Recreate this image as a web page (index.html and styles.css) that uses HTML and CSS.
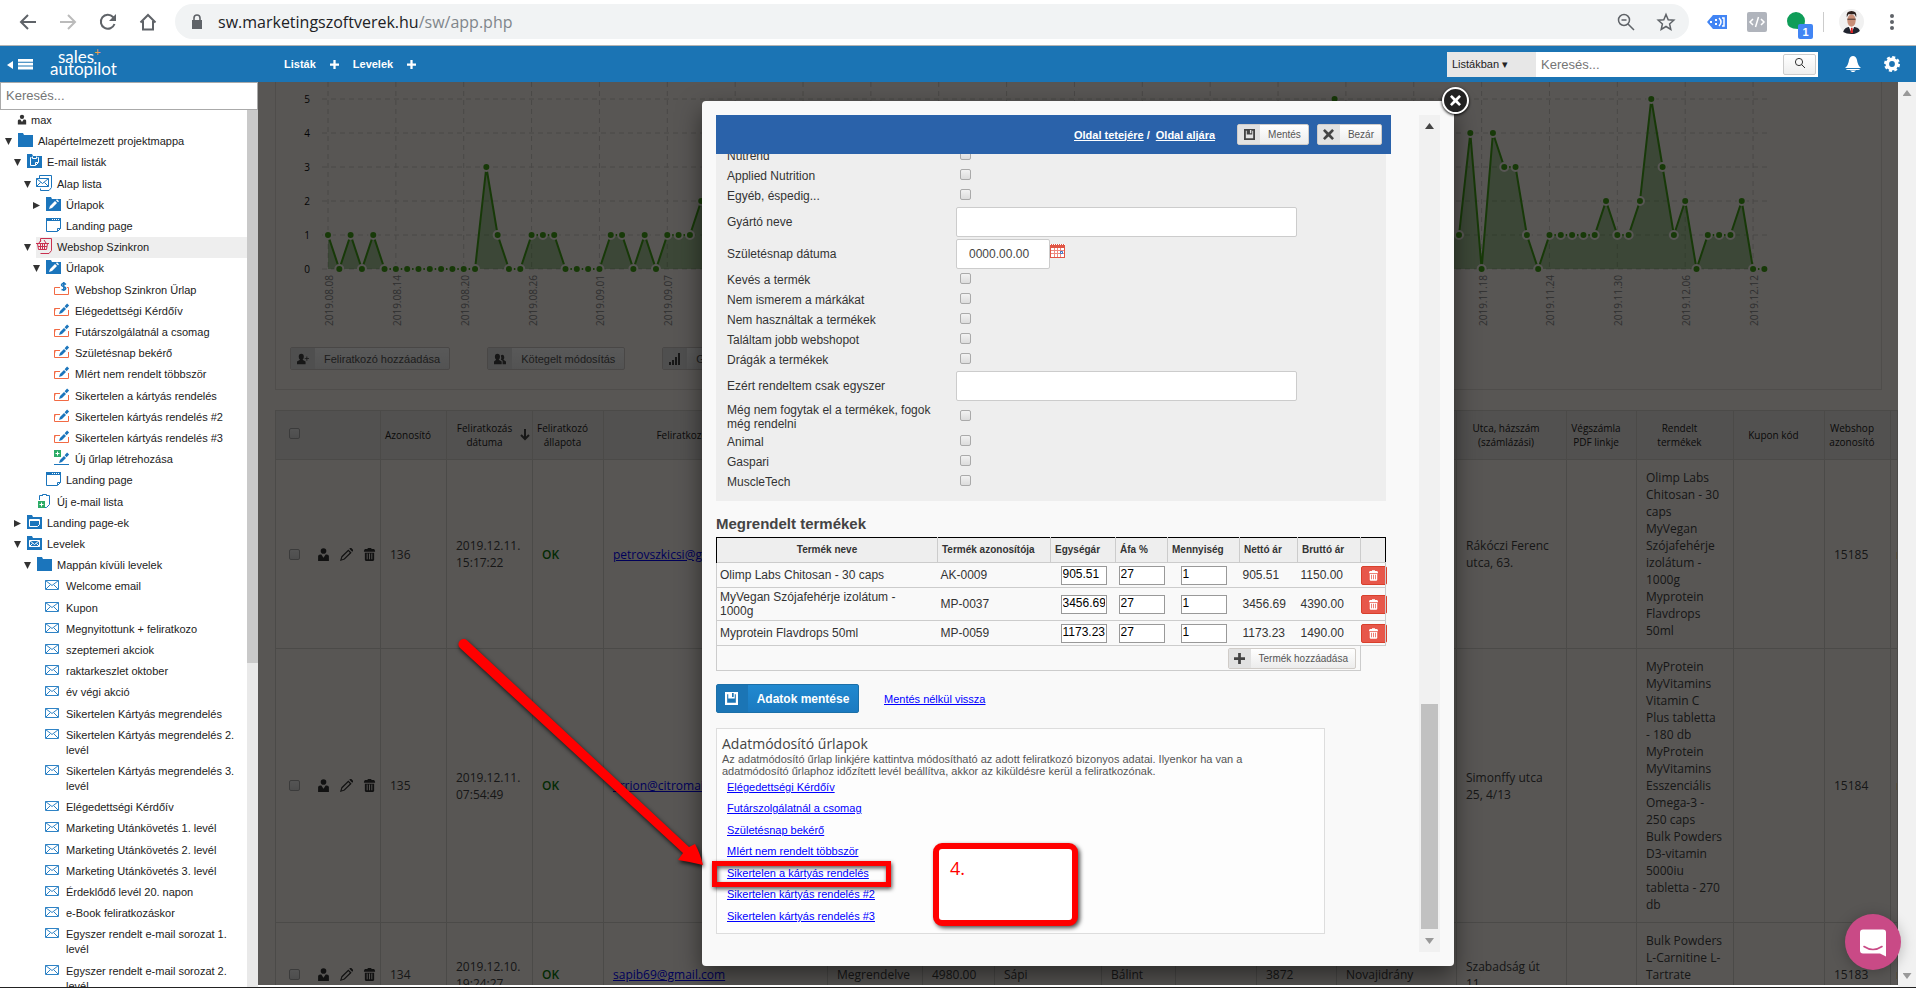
FILE: index.html
```html
<!DOCTYPE html>
<html lang="hu">
<head>
    <meta charset="UTF-8">
    <meta name="viewport" content="width=device-width, initial-scale=1.0">
    <title>SalesAutopilot</title>
    <link rel="stylesheet" href="styles.css">
</head>
<body>
    <!-- Icon set -->
    <svg class="sprite" aria-hidden="true">
        <symbol id="i-user" viewBox="0 0 12 12"><circle cx="6" cy="2.8" r="2.6"/><path d="M1 12V7.500Q1 6 3 6h1l2 3 2-3h1q2 0 2 1.500V12z"/></symbol>
        <symbol id="i-folder" viewBox="0 0 16 16"><path fill="#1b75bc" d="M1 1h5l1 2h9v12H1z"/></symbol>
        <symbol id="i-folder-list" viewBox="0 0 16 16"><path fill="#1b75bc" d="M1 1h5l1 2h9v12H1z"/><path fill="none" stroke="#fff" d="M5.500 4.500h-1v8h5l3-3v-5h-1M6.500 3.500v2h4v-2M9.500 12v-2.500H12"/></symbol>
        <symbol id="i-folder-pen" viewBox="0 0 16 16"><path fill="#1b75bc" d="M1 1h5l1 2h9v12H1z"/><path fill="#fff" d="M4 13l1-3 5-5 2 2-5 5zM11 4.200l1-1 2 2-1 1z"/></symbol>
        <symbol id="i-folder-page" viewBox="0 0 16 16"><path fill="#1b75bc" d="M1 1h5l1 2h9v12H1z"/><path fill="none" stroke="#fff" d="M3.500 5.500h10v5l-2 2h-8zM3.500 6.500h10"/></symbol>
        <symbol id="i-folder-mail" viewBox="0 0 16 16"><path fill="#1b75bc" d="M1 1h5l1 2h9v12H1z"/><path fill="none" stroke="#fff" d="M3.500 5.500h10v6h-10zl5 4 5-4M3.500 11.500l3-3M13.500 11.500l-3-3"/></symbol>
        <symbol id="i-maillist" viewBox="0 0 16 16"><path fill="none" stroke="#1b75bc" d="M3.500 3V.5h12v12l-2.500 3H4.500v-2M.5 3.500h12v8H.5zl6 5 6-5M.5 11.500l4-4M12.500 11.500l-4-4"/></symbol>
        <symbol id="i-shoplist" viewBox="0 0 16 16"><path fill="none" stroke="#c9304f" d="M4.500 4V.5h11v12l-2.500 3H4.500M0 5.500h13M1.500 5.500l1 6h8l1-6M4.500 5v6M6.500 5v6M8.500 5v6M2 8.500h9M3 5l2-3M10 5L8 2"/></symbol>
        <symbol id="i-page" viewBox="0 0 16 16"><path fill="none" stroke="#1b75bc" d="M1.500 1.500h14v10l-3 3h-11zM12.500 14v-2.500h3"/><path fill="#1b75bc" d="M1 1h15v3H1z"/><path stroke="#fff" stroke-dasharray="1 1" d="M7 2.500h8"/></symbol>
        <symbol id="i-form" viewBox="0 0 16 16"><path fill="none" stroke="#f26a44" d="M6 6.500H.5v7h14V8M1 6.500v2"/><path fill="#1b75bc" d="M5 12l1-3 4-4 2 2-4 4zM10.600 4.200l2.500-2.700 2 2-2.500 2.700z"/></symbol>
        <symbol id="i-shopform" viewBox="0 0 16 16"><path fill="none" stroke="#f26a44" d="M6 6.500H.5v7h14V6.500H13"/><path fill="none" stroke="#1b75bc" stroke-width="1.500" d="M12 3.500Q9.500 1.500 8 3t1.500 2.500T11.500 8 7.500 8.500M9.800 1v9"/></symbol>
        <symbol id="i-newform" viewBox="0 0 16 16"><path fill="#2bab66" d="M0 0h7v7H0z"/><path stroke="#fff" d="M3.500 1.500v4M1.500 3.500h4"/><path stroke="#1b75bc" d="M0 14.500h15"/><path fill="#1b75bc" d="M5 13l1-3 4-4 2 2-4 4zM10.600 5.200l2.500-2.700 2 2-2.500 2.700z"/></symbol>
        <symbol id="i-newlist" viewBox="0 0 16 16"><path fill="none" stroke="#1b75bc" d="M3.500 7V2.500H6M11 2.500h2.500v9l-3 3H9M6.500 3V1.500h4V3"/><path fill="#2bab66" d="M2 8h7v7H2z"/><path stroke="#fff" d="M5.500 9.500v4M3.500 11.500h4"/></symbol>
        <symbol id="i-mail" viewBox="0 0 14 10"><path fill="none" stroke="#2f83c5" d="M.5.5h13v9H.5zl6.500 5 6.500-5M1 9l4-4M13 9L9 5"/></symbol>
        <symbol id="i-save" viewBox="0 0 12 12"><path fill-rule="evenodd" d="M0 0h12v12H0zM2 2v8h8V2H9v4H3V2zM6.500 1v3.500H8V1z"/></symbol>
        <symbol id="i-x" viewBox="0 0 12 12"><path d="M0 2l2-2 4 3.800L10 0l2 2-3.800 4L12 10l-2 2-4-3.800L2 12l-2-2 3.800-4z"/></symbol>
        <symbol id="i-plus" viewBox="0 0 12 12"><path d="M4.500 0h3v4.500H12v3H7.500V12h-3V7.500H0v-3h4.500z"/></symbol>
        <symbol id="i-trash" viewBox="0 0 12 14"><path fill-rule="evenodd" d="M4 0h4v1h3l1 2v1H0V3l1-2h3zM1 5h10v8l-1 1H2l-1-1zM3 6v6h1V6zM5.500 6v6h1V6zM8 6v6h1V6z"/></symbol>
        <symbol id="i-pencil" viewBox="0 0 14 14"><path fill-rule="evenodd" d="M0 14l1.500-5L9 1.500 12.500 5 5 12.500zM2.500 10l-.8 2.300L4 11.500 10.500 5 9 3.500zM10 .8l.8-.8h1.400L14 1.800v1.400l-.8.8z"/></symbol>
    </svg>

    <div class="browser-bar">
        <svg class="nav-icon" viewBox="0 0 20 20"><path d="M18 10H3M10 3l-7 7 7 7"/></svg>
        <svg class="nav-icon faded" viewBox="0 0 20 20"><path d="M2 10h15M10 3l7 7-7 7"/></svg>
        <svg class="nav-icon" viewBox="0 0 20 20"><path d="M16.500 12A7 7 0 1 1 15 5l2 2"/><path class="solid" d="M18 2v7h-7z"/></svg>
        <svg class="nav-icon" viewBox="0 0 20 20"><path d="M2.500 10.500L10 3l7.500 7.500M5 9v8.500h10V9"/></svg>
        <div class="url-pill">
            <svg class="lock" viewBox="0 0 12 16"><path fill="#5f6368" d="M1 6h10v9H1z"/><path fill="none" stroke="#5f6368" stroke-width="1.600" d="M3 7V4a3 3 0 0 1 6 0v3"/></svg>
            <span class="url">sw.marketingszoftverek.hu<span class="path">/sw/app.php</span></span>
            <svg class="nav-icon" viewBox="0 0 20 20"><circle cx="8" cy="8" r="5.500"/><path d="M12 12l6 6M5.500 8h5"/></svg>
            <svg class="nav-icon" viewBox="0 0 20 20"><path d="M10 2.500l2.200 5.200 5.600.5-4.200 3.700 1.200 5.500L10 14.500l-4.800 2.900 1.200-5.500-4.200-3.700 5.600-.5z"/></svg>
        </div>
        <svg class="ext" viewBox="0 0 20 20"><path fill="#4285f4" d="M6 3h14v14H6l-6-7z"/><path fill="none" stroke="#fff" stroke-width="1.500" d="M12 6q4 4 0 8M15 6h2v8h-2"/><path fill="#fff" d="M8 7h2v2H8zM8 11h2v2H8zM3 9h2v2H3z"/></svg>
        <svg class="ext" viewBox="0 0 20 20"><rect width="20" height="20" rx="2" fill="#b0b4bc"/><path fill="none" stroke="#fff" stroke-width="1.500" d="M6 7l-3 3 3 3M14 7l3 3-3 3M11.500 5l-3 10"/></svg>
        <span class="ext badge-wrap">
            <svg viewBox="0 0 20 20"><path fill="#0f9d58" d="M9 0a9 9 0 0 1 9 9q0 7-7 11v-3Q0 17 0 9a9 9 0 0 1 9-9"/></svg>
            <span class="badge">1</span>
        </span>
        <span class="divider"></span>
        <svg class="avatar" viewBox="0 0 24 24"><circle cx="12" cy="12" r="12" fill="#f1f1f1"/><path fill="#20242f" d="M4 22q1-5 8-5t8 4q-3 3-8 3t-8-2"/><path fill="#fff" d="M9 16h6l-3 7z"/><path fill="#d22" d="M11.500 18h1.500l.5 5h-2.500z"/><ellipse cx="12" cy="11" rx="4" ry="6" fill="#c98f78"/><path fill="#2b1f1c" d="M7.500 8q-1-6 4.500-6t4.500 6l-1.500-3h-6z"/><path stroke="#2b1f1c" stroke-width=".8" d="M8 9.800h8"/></svg>
        <svg class="dots" viewBox="0 0 4 16"><circle cx="2" cy="2" r="2"/><circle cx="2" cy="8" r="2"/><circle cx="2" cy="14" r="2"/></svg>
    </div>

    <header class="app-header">
        <svg class="menu-toggle" viewBox="0 0 26 12"><path d="M0 7l6-4v8zM11 1h15v2.700H11zM11 4.700h15v2.700H11zM11 8.400h15v3H11z"/></svg>
        <div class="logo"><span class="logo-top">sales<sup>+</sup></span><span>autopilot</span></div>
        <nav class="main-nav">
            <a href="#">Listák</a>
            <a href="#" aria-label="Új lista"><svg class="plus"><use href="#i-plus"/></svg></a>
            <a href="#">Levelek</a>
            <a href="#" aria-label="Új levél"><svg class="plus"><use href="#i-plus"/></svg></a>
        </nav>
        <div class="head-search">
            <select aria-label="Keresés helye"><option>Listákban ▾</option></select>
            <input type="text" placeholder="Keresés..." aria-label="Keresés">
            <button aria-label="Keresés"><svg viewBox="0 0 12 12"><circle cx="5" cy="5" r="3.600"/><path d="M7.500 7.500L11 11"/></svg></button>
        </div>
        <svg class="bell" viewBox="0 0 16 16"><path d="M8 0q3 0 4 4 .5 5 4 8H0q3.500-3 4-8 1-4 4-4M1 13h14q0 1-2 1H3q-2 0-2-1M5 14.500h6L9 16H7z"/></svg>
        <svg class="gear" viewBox="0 0 16 16"><circle cx="8" cy="8" r="4.700" fill="none" stroke="#fff" stroke-width="3.600"/><circle cx="8" cy="8" r="6.800" fill="none" stroke="#fff" stroke-width="2.400" stroke-dasharray="3 2.340"/></svg>
    </header>

    <div class="content">
        <aside class="sidebar">
            <input type="text" class="tree-search" placeholder="Keresés..." aria-label="Keresés a listában">
            <div class="tree-wrap">
                <ul class="tree">
                    <li class="user"><svg><use href="#i-user"/></svg><span>max</span></li>
                    <li class="open"><svg><use href="#i-folder"/></svg><span>Alapértelmezett projektmappa</span></li>
                    <li class="l1 open"><svg><use href="#i-folder-list"/></svg><span>E-mail listák</span></li>
                    <li class="l2 open"><svg><use href="#i-maillist"/></svg><span>Alap lista</span></li>
                    <li class="l3 closed"><svg><use href="#i-folder-pen"/></svg><span>Űrlapok</span></li>
                    <li class="l3"><svg><use href="#i-page"/></svg><span>Landing page</span></li>
                    <li class="l2 open selected"><svg><use href="#i-shoplist"/></svg><span>Webshop Szinkron</span></li>
                    <li class="l3 open"><svg><use href="#i-folder-pen"/></svg><span>Űrlapok</span></li>
                    <li class="l4"><svg><use href="#i-shopform"/></svg><span>Webshop Szinkron Űrlap</span></li>
                    <li class="l4"><svg><use href="#i-form"/></svg><span>Elégedettségi Kérdőív</span></li>
                    <li class="l4"><svg><use href="#i-form"/></svg><span>Futárszolgálatnál a csomag</span></li>
                    <li class="l4"><svg><use href="#i-form"/></svg><span>Születésnap bekérő</span></li>
                    <li class="l4"><svg><use href="#i-form"/></svg><span>MIért nem rendelt többször</span></li>
                    <li class="l4"><svg><use href="#i-form"/></svg><span>Sikertelen a kártyás rendelés</span></li>
                    <li class="l4"><svg><use href="#i-form"/></svg><span>Sikertelen kártyás rendelés #2</span></li>
                    <li class="l4"><svg><use href="#i-form"/></svg><span>Sikertelen kártyás rendelés #3</span></li>
                    <li class="l4"><svg><use href="#i-newform"/></svg><span>Új űrlap létrehozása</span></li>
                    <li class="l3"><svg><use href="#i-page"/></svg><span>Landing page</span></li>
                    <li class="l2"><svg><use href="#i-newlist"/></svg><span>Új e-mail lista</span></li>
                    <li class="l1 closed"><svg><use href="#i-folder-page"/></svg><span>Landing page-ek</span></li>
                    <li class="l1 open"><svg><use href="#i-folder-mail"/></svg><span>Levelek</span></li>
                    <li class="l2 open"><svg><use href="#i-folder"/></svg><span>Mappán kívüli levelek</span></li>
                    <li class="l3 mail"><svg><use href="#i-mail"/></svg><span>Welcome email</span></li>
                    <li class="l3 mail"><svg><use href="#i-mail"/></svg><span>Kupon</span></li>
                    <li class="l3 mail"><svg><use href="#i-mail"/></svg><span>Megnyitottunk + feliratkozo</span></li>
                    <li class="l3 mail"><svg><use href="#i-mail"/></svg><span>szeptemeri akciok</span></li>
                    <li class="l3 mail"><svg><use href="#i-mail"/></svg><span>raktarkeszlet oktober</span></li>
                    <li class="l3 mail"><svg><use href="#i-mail"/></svg><span>év végi akció</span></li>
                    <li class="l3 mail"><svg><use href="#i-mail"/></svg><span>Sikertelen Kártyás megrendelés</span></li>
                    <li class="l3 mail"><svg><use href="#i-mail"/></svg><span>Sikertelen Kártyás megrendelés 2. levél</span></li>
                    <li class="l3 mail"><svg><use href="#i-mail"/></svg><span>Sikertelen Kártyás megrendelés 3. levél</span></li>
                    <li class="l3 mail"><svg><use href="#i-mail"/></svg><span>Elégedettségi Kérdőív</span></li>
                    <li class="l3 mail"><svg><use href="#i-mail"/></svg><span>Marketing Utánkövetés 1. levél</span></li>
                    <li class="l3 mail"><svg><use href="#i-mail"/></svg><span>Marketing Utánkövetés 2. levél</span></li>
                    <li class="l3 mail"><svg><use href="#i-mail"/></svg><span>Marketing Utánkövetés 3. levél</span></li>
                    <li class="l3 mail"><svg><use href="#i-mail"/></svg><span>Érdeklődő levél 20. napon</span></li>
                    <li class="l3 mail"><svg><use href="#i-mail"/></svg><span>e-Book feliratkozáskor</span></li>
                    <li class="l3 mail"><svg><use href="#i-mail"/></svg><span>Egyszer rendelt e-mail sorozat 1. levél</span></li>
                    <li class="l3 mail"><svg><use href="#i-mail"/></svg><span>Egyszer rendelt e-mail sorozat 2. levél</span></li>
                </ul>
                <div class="tree-scroll"><div class="tree-thumb"></div></div>
            </div>
        </aside>

        <main class="main">
            <section class="chart-card">
                <svg id="chart" class="chart"></svg>
                <div class="chart-actions">
                    <button class="btn"><span class="ico"><svg viewBox="0 0 14 12"><path d="M5 0q3 0 3 3.500Q8 6 6.500 7L10 9v3H0V9l3.500-2Q2 6 2 3.500 2 0 5 0M11 3h1v2h2v1h-2v2h-1V6H9V5h2z"/></svg></span><span class="txt">Feliratkozó hozzáadása</span></button>
                    <button class="btn"><span class="ico"><svg viewBox="0 0 14 12"><path d="M4 0q3 0 3 3.500Q7 6 5.500 7L9 9v3H0V9l2.500-2Q1 6 1 3.500 1 0 4 0M10 1q2 0 2 3 0 2-1 3l3 2v3h-4V8L8 7q1-2 0-5 .5-1 2-1"/></svg></span><span class="txt">Kötegelt módosítás</span></button>
                    <button class="btn"><span class="ico"><svg viewBox="0 0 12 12"><path d="M0 9h2v3H0zM3 7h2v5H3zM6 4h2v8H6zM9 0h2v12H9z"/></svg></span><span class="txt">Grafikon</span></button>
                </div>
            </section>

            <table class="subscribers">
                <colgroup>
                    <col class="w105"><col class="w66"><col class="w86"><col class="w71"><col class="w224"><col class="w95"><col class="w72"><col class="w107"><col class="w74"><col class="w81"><col class="w80"><col class="w120"><col class="w110"><col class="w70"><col class="w97"><col class="w91"><col class="w66"><col>
                </colgroup>
                <thead>
                    <tr>
                        <th><input type="checkbox" aria-label="Mind kijelölése"></th>
                        <th>Azonosító</th>
                        <th class="sort-col"><span class="sorted">Feliratkozás dátuma<svg viewBox="0 0 10 12"><path d="M5 0v10M1 6l4 4 4-4"/></svg></span></th>
                        <th>Feliratkozó állapota</th>
                        <th>Feliratkozó e-mail címe</th>
                        <th></th><th></th><th></th><th></th><th></th><th></th><th></th>
                        <th>Utca, házszám (számlázási)</th>
                        <th>Végszámla PDF linkje</th>
                        <th>Rendelt<br>termékek</th>
                        <th>Kupon kód</th>
                        <th>Webshop azonosító</th>
                        <th></th>
                    </tr>
                </thead>
                <tbody>
                    <tr>
                        <td><div class="tools"><input type="checkbox" aria-label="136"><svg><use href="#i-user"/></svg><svg><use href="#i-pencil"/></svg><svg><use href="#i-trash"/></svg></div></td>
                        <td>136</td>
                        <td>2019.12.11. 15:17:22</td>
                        <td class="ok">OK</td>
                        <td><a href="#">petrovszkicsi@gmail.com</a></td>
                        <td></td><td></td><td></td><td></td><td></td><td></td><td></td>
                        <td>Rákóczi Ferenc utca, 63.</td>
                        <td></td>
                        <td>Olimp Labs Chitosan - 30 caps<br>MyVegan Szójafehérje izolátum - 1000g<br>Myprotein Flavdrops 50ml</td>
                        <td></td>
                        <td>15185</td>
                        <td>n</td>
                    </tr>
                    <tr>
                        <td><div class="tools"><input type="checkbox" aria-label="135"><svg><use href="#i-user"/></svg><svg><use href="#i-pencil"/></svg><svg><use href="#i-trash"/></svg></div></td>
                        <td>135</td>
                        <td>2019.12.11. 07:54:49</td>
                        <td class="ok">OK</td>
                        <td><a href="#">arrion@citromail.hu</a></td>
                        <td></td><td></td><td></td><td></td><td></td><td></td><td></td>
                        <td>Simonffy utca 25, 4/13</td>
                        <td></td>
                        <td>MyProtein MyVitamins Vitamin C<br>Plus tabletta<br>- 180 db<br>MyProtein MyVitamins Esszenciális Omega-3 - 250 caps<br>Bulk Powders D3-vitamin 5000iu tabletta - 270 db</td>
                        <td></td>
                        <td>15184</td>
                        <td>n</td>
                    </tr>
                    <tr>
                        <td><div class="tools"><input type="checkbox" aria-label="134"><svg><use href="#i-user"/></svg><svg><use href="#i-pencil"/></svg><svg><use href="#i-trash"/></svg></div></td>
                        <td>134</td>
                        <td>2019.12.10. 19:24:27</td>
                        <td class="ok">OK</td>
                        <td><a href="#">sapib69@gmail.com</a></td>
                        <td>Megrendelve</td><td>4980.00</td><td>Sápi</td><td>Bálint</td><td></td><td>3872</td><td>Novajidrány</td>
                        <td>Szabadság út 11.</td>
                        <td></td>
                        <td>Bulk Powders L-Carnitine L-Tartrate<br>100 g<br>1 db</td>
                        <td></td>
                        <td>15183</td>
                        <td>n</td>
                    </tr>
                </tbody>
            </table>

            <div class="overlay">
                <div class="modal">
                    <button class="modal-close" aria-label="Bezárás"><svg><use href="#i-x"/></svg></button>
                    <div class="modal-body">
                        <div class="toolbar">
                            <a href="#">Oldal tetejére</a><span class="slash">/</span><a href="#">Oldal aljára</a>
                            <button class="btn small"><span class="ico"><svg><use href="#i-save"/></svg></span><span class="txt">Mentés</span></button>
                            <button class="btn small"><span class="ico"><svg><use href="#i-x"/></svg></span><span class="txt">Bezár</span></button>
                        </div>
                        <form class="fields">
                            <label for="f1">Nutrend</label><input type="checkbox" id="f1">
                            <label for="f2">Applied Nutrition</label><input type="checkbox" id="f2">
                            <label for="f3">Egyéb, éspedig...</label><input type="checkbox" id="f3">
                            <label for="f4">Gyártó neve</label><input type="text" id="f4">
                            <label for="f5">Születésnap dátuma</label>
                            <div class="date">
                                <input type="text" id="f5" value="0000.00.00">
                                <svg viewBox="0 0 15 15"><path fill="#e05545" d="M0 1h15v14H0z"/><path stroke="#fff" stroke-dasharray="1 1" d="M0 1.500h15"/><path fill="#fff" d="M1 5h13v9H1z"/><path stroke="#ee8a80" d="M1 7.500h13M1 10.500h13M4.500 5v9M7.500 5v9M10.500 5v9"/><path fill="none" stroke="#3878c8" d="M10.500 8.500h2v2h-2z"/></svg>
                            </div>
                            <label for="f6">Kevés a termék</label><input type="checkbox" id="f6">
                            <label for="f7">Nem ismerem a márkákat</label><input type="checkbox" id="f7">
                            <label for="f8">Nem használtak a termékek</label><input type="checkbox" id="f8">
                            <label for="f9">Találtam jobb webshopot</label><input type="checkbox" id="f9">
                            <label for="f10">Drágák a termékek</label><input type="checkbox" id="f10">
                            <label for="f11">Ezért rendeltem csak egyszer</label><input type="text" id="f11">
                            <label for="f12">Még nem fogytak el a termékek, fogok még rendelni</label><input type="checkbox" id="f12">
                            <label for="f13">Animal</label><input type="checkbox" id="f13">
                            <label for="f14">Gaspari</label><input type="checkbox" id="f14">
                            <label for="f15">MuscleTech</label><input type="checkbox" id="f15">
                        </form>

                        <h2>Megrendelt termékek</h2>
                        <table class="products">
                            <colgroup><col class="w221"><col class="w113"><col class="w65"><col class="w52"><col class="w72"><col class="w58"><col class="w63"><col></colgroup>
                            <thead>
                                <tr><th>Termék neve</th><th>Termék azonosítója</th><th>Egységár</th><th>Áfa %</th><th>Mennyiség</th><th>Nettó ár</th><th>Bruttó ár</th><th></th></tr>
                            </thead>
                            <tbody>
                                <tr>
                                    <td>Olimp Labs Chitosan - 30 caps</td><td>AK-0009</td>
                                    <td class="num"><input type="text" value="905.51" aria-label="Egységár"></td>
                                    <td><input type="text" value="27" aria-label="Áfa"></td>
                                    <td class="mid"><input type="text" value="1" aria-label="Mennyiség"></td>
                                    <td>905.51</td><td>1150.00</td>
                                    <td class="del"><button aria-label="Törlés"><svg><use href="#i-trash"/></svg></button></td>
                                </tr>
                                <tr>
                                    <td>MyVegan Szójafehérje izolátum - 1000g</td><td>MP-0037</td>
                                    <td class="num"><input type="text" value="3456.69" aria-label="Egységár"></td>
                                    <td><input type="text" value="27" aria-label="Áfa"></td>
                                    <td class="mid"><input type="text" value="1" aria-label="Mennyiség"></td>
                                    <td>3456.69</td><td>4390.00</td>
                                    <td class="del"><button aria-label="Törlés"><svg><use href="#i-trash"/></svg></button></td>
                                </tr>
                                <tr>
                                    <td>Myprotein Flavdrops 50ml</td><td>MP-0059</td>
                                    <td class="num"><input type="text" value="1173.23" aria-label="Egységár"></td>
                                    <td><input type="text" value="27" aria-label="Áfa"></td>
                                    <td class="mid"><input type="text" value="1" aria-label="Mennyiség"></td>
                                    <td>1173.23</td><td>1490.00</td>
                                    <td class="del"><button aria-label="Törlés"><svg><use href="#i-trash"/></svg></button></td>
                                </tr>
                            </tbody>
                        </table>
                        <div class="add-row">
                            <button class="btn small"><span class="ico"><svg><use href="#i-plus"/></svg></span><span class="txt">Termék hozzáadása</span></button>
                        </div>

                        <div class="save-row">
                            <button class="save"><span class="ico"><svg><use href="#i-save"/></svg></span><span class="txt">Adatok mentése</span></button>
                            <a href="#">Mentés nélkül vissza</a>
                        </div>

                        <div class="form-links">
                            <h3>Adatmódosító űrlapok</h3>
                            <p>Az adatmódosító űrlap linkjére kattintva módosítható az adott feliratkozó bizonyos adatai. Ilyenkor ha van a adatmódosító űrlaphoz időzített levél beállítva, akkor az kiküldésre kerül a feliratkozónak.</p>
                            <ul>
                                <li><a href="#">Elégedettségi Kérdőív</a></li>
                                <li><a href="#">Futárszolgálatnál a csomag</a></li>
                                <li><a href="#">Születésnap bekérő</a></li>
                                <li><a href="#">MIért nem rendelt többször</a></li>
                                <li class="marked"><a href="#">Sikertelen a kártyás rendelés</a></li>
                                <li><a href="#">Sikertelen kártyás rendelés #2</a></li>
                                <li><a href="#">Sikertelen kártyás rendelés #3</a></li>
                            </ul>
                            <div class="callout">4.</div>
                        </div>
                    </div>
                    <div class="modal-scroll"><span class="up"></span><div class="thumb"></div><span class="down"></span></div>
                    <svg class="arrow" viewBox="0 0 250 232"><path fill="#f00" d="M9.200 3.500A5 5 0 0 0 2 11L225 216l-5 7q13 2 25 5-3-12-8-21l-6 3z"/></svg>
                </div>
            </div>
        </main>

        <div class="page-scroll"><span class="up"></span><span class="down"></span></div>
        <button class="chat" aria-label="Chat"><svg viewBox="0 0 28 28"><path fill="#fff" d="M4 1h20q3 0 3 3v24l-6-3H4q-3 0-3-3V4q0-3 3-3"/><path fill="none" stroke="#c94a86" stroke-width="1.600" stroke-linecap="round" d="M5 18q9 6 18 0"/></svg></button>
    </div>

    <script>
        // Daily subscriptions from 2019.08.08
        const days = [1,0,1,0,1,0,0,0,0,0,0,0,0,0,3,1,0,0,1,1,1,0,0,0,0,1,1,0,1,0,1,1,1,2];
        while (days.length < 100) days.push(days.length === 89 ? 5 : 1);
        days.push(1,4,0,4,3,3,1,0,1,1,1,1,1,2,1,1,2,5,3,1,2,0,1,1,1,2,0,0);

        const labels = ['08.08','08.14','08.20','08.26','09.01','09.07','09.13','09.19','09.25','10.01','10.07','10.13','10.19','10.25','10.31','11.06','11.12','11.18','11.24','11.30','12.06','12.12'];
        const x = i => 52 + i * 11.31;
        const y = v => 187 - v * 34;
        let svg = '';

        for (let v = 0; v <= 5; v++) {
            svg += `<line class="grid" x1="46" x2="1495" y1="${y(v)}" y2="${y(v)}"/>`;
            svg += `<text class="value" x="34" y="${y(v) + 4}">${v}</text>`;
        }
        labels.forEach((d, i) => {
            svg += `<line class="grid" x1="${x(i * 6)}" x2="${x(i * 6)}" y1="0" y2="187"/>`;
            svg += `<text class="day" transform="translate(${x(i * 6) + 5} 244) rotate(-90)">2019.${d}</text>`;
        });
        const points = days.map((v, i) => `${x(i)},${y(v)}`).join(' ');
        svg += `<polygon class="area" points="${x(0)},187 ${points} ${x(days.length - 1)},187"/>`;
        svg += `<polyline class="line" points="${points}"/>`;
        days.forEach((v, i) => { svg += `<circle cx="${x(i)}" cy="${y(v)}" r="4"/>`; });
        document.getElementById('chart').innerHTML = svg;
    </script>
</body>
</html>
```
FILE: styles.css
```css
* {
    margin: 0;
    padding: 0;
    box-sizing: border-box;
}

body {
    font-family: "Liberation Sans", Arial, sans-serif;
    font-size: 11px;
    color: #333;
    background: #fff;
    height: 100vh;
    overflow: hidden;
    display: flex;
    flex-direction: column;
    border-bottom: 1px solid #222;
}

ul {
    list-style: none;
}

a {
    color: #00f;
}

button,
input,
select {
    font-family: inherit;
}

button {
    cursor: pointer;
}

input[type="checkbox"] {
    appearance: none;
    width: 11px;
    height: 11px;
    border: 1px solid #aaa;
    border-radius: 2px;
    background: linear-gradient(#f2f2f2, #dcdcdc);
}

.sprite {
    display: none;
}

/* Browser bar */
.browser-bar {
    flex: none;
    height: 46px;
    display: flex;
    align-items: center;
    padding: 0 22px 2px 18px;
    border-bottom: 1px solid #b4b4b4;
}

.nav-icon {
    width: 20px;
    height: 20px;
    margin-right: 20px;
    fill: none;
    stroke: #5f6368;
    stroke-width: 2;
}

.nav-icon .solid {
    fill: #5f6368;
    stroke: none;
}

.faded {
    stroke: #bbb;
}

.url-pill {
    flex: 1;
    height: 35px;
    margin: 0 18px 0 -3px;
    padding-left: 16px;
    display: flex;
    align-items: center;
    border-radius: 18px;
    background: #f1f3f4;
}

.url-pill .nav-icon {
    stroke-width: 1.5;
}

.url-pill .nav-icon:last-child {
    margin-right: 13px;
}

.lock {
    width: 12px;
    height: 16px;
    margin-right: 15px;
}

.url {
    flex: 1;
    font: 16px "Open Sans", sans-serif;
    color: #202124;
}

.path {
    color: #80868b;
}

.ext {
    width: 20px;
    height: 20px;
    margin-right: 20px;
}

.badge-wrap {
    position: relative;
    margin-right: 16px;
}

.badge {
    position: absolute;
    left: 11px;
    top: 12px;
    width: 15px;
    height: 15px;
    border-radius: 2px;
    background: #4285f4;
    color: #fff;
    font-weight: bold;
    line-height: 16px;
    text-align: center;
}

.divider {
    width: 1px;
    height: 20px;
    margin-right: 15px;
    background: #ccc;
}

.avatar {
    width: 25px;
    height: 25px;
    margin-right: 26px;
}

.dots {
    width: 4px;
    height: 16px;
    fill: #5f6368;
}

/* Application header */
.app-header {
    flex: none;
    height: 36px;
    display: flex;
    align-items: center;
    padding: 0 16px 0 7px;
    background: #1b74b4;
    color: #fff;
}

.menu-toggle {
    width: 26px;
    height: 12px;
    fill: #fff;
}

.logo {
    width: 74px;
    margin-left: 17px;
    display: flex;
    flex-direction: column;
    font: 17px Lato, sans-serif;
    line-height: 12px;
    padding-bottom: 3px;
}

.logo-top {
    padding-left: 8px;
}

.logo sup {
    color: #f5a04a;
    font-size: 11px;
    line-height: 0;
}

.main-nav {
    flex: 1;
    display: flex;
    align-items: center;
    gap: 14px;
    margin-left: 160px;
}

.main-nav a {
    color: #fff;
    font-weight: bold;
    text-decoration: none;
}

.plus {
    display: block;
    width: 9px;
    height: 9px;
    fill: #fff;
}

.head-search {
    width: 371px;
    height: 25px;
    display: flex;
    align-items: center;
    padding-right: 2px;
    background: #fff;
}

.head-search select {
    appearance: none;
    width: 89px;
    height: 25px;
    padding-left: 5px;
    border: 0;
    background: #e7e7e7;
    color: #222;
    font-size: 11px;
}

.head-search input {
    flex: 1;
    min-width: 0;
    height: 21px;
    padding-left: 5px;
    border: 0;
    font-size: 13px;
}

.head-search button {
    width: 33px;
    height: 21px;
    border: 1px solid #ccc;
    border-radius: 2px;
    background: linear-gradient(#fff, #eee);
}

.head-search button svg {
    width: 12px;
    height: 12px;
    fill: none;
    stroke: #333;
}

.bell {
    width: 16px;
    height: 16px;
    margin: 0 23px 0 27px;
    fill: #fff;
}

.gear {
    width: 16px;
    height: 16px;
}

.content {
    position: relative;
    flex: 1;
    min-height: 0;
    display: flex;
}

/* Tree */
.sidebar {
    width: 258px;
    display: flex;
    flex-direction: column;
}

.tree-search {
    flex: none;
    height: 28px;
    padding: 0 0 2px 5px;
    border: 1px solid #aaa;
    font-size: 13px;
}

.tree-wrap {
    flex: 1;
    min-height: 0;
    display: flex;
    overflow: hidden;
}

.tree {
    flex: 1;
}

.tree li {
    display: flex;
    align-items: flex-start;
    padding: 3px 6px 3px 5px;
    line-height: 15px;
    color: #222;
}

.tree li:nth-child(5n+3) {
    padding-bottom: 4px;
}

.tree li::before {
    content: "";
    flex: none;
    width: 12px;
}

.tree .open::before,
.tree .closed::before {
    width: 7px;
    height: 7px;
    margin: 4px 5px 0 0;
    background: #333;
    clip-path: polygon(0 0, 100% 0, 50% 100%);
}

.tree .closed::before {
    clip-path: polygon(0 0, 100% 50%, 0 100%);
}

.tree svg {
    flex: none;
    width: 16px;
    height: 16px;
    margin: -2px 5px 0 0;
}

.tree .user svg {
    width: 10px;
    height: 11px;
    margin: 1px 4px 0 0;
    fill: #333;
}

.tree .l1 {
    padding-left: 14px;
}

.tree .l2 {
    padding-left: 24px;
}

.tree .l3 {
    padding-left: 33px;
}

.tree .l4 {
    padding-left: 42px;
}

.tree .mail svg {
    width: 14px;
    height: 10px;
    margin: 1px 7px 0 0;
}

.tree .selected {
    background: linear-gradient(90deg, #fff 36px, #eee 36px);
}

.tree-scroll {
    width: 11px;
    background: #e9e9e9;
}

.tree-thumb {
    height: 63%;
    background: #c9c9c9;
}

/* Main area */
.main {
    position: relative;
    flex: 1;
    min-width: 0;
    margin-bottom: 2px;
    padding-left: 17px;
    overflow: hidden;
    background: #fbf6f1;
    font-family: "Open Sans", sans-serif;
}

.chart-card {
    height: 308px;
    margin-right: 16px;
    border: 1px solid #e2ddd8;
    border-top: 0;
}

.chart {
    display: block;
    width: 100%;
    height: 250px;
}

.chart .grid {
    stroke: #d2cdc8;
    stroke-dasharray: 5 4;
}

.chart .value {
    font-size: 10px;
    text-anchor: end;
    fill: #111;
}

.chart .day {
    font-size: 10px;
    fill: #888;
}

.chart .area {
    fill: #3c8c28;
    fill-opacity: .42;
}

.chart .line {
    fill: none;
    stroke: #43a318;
    stroke-width: 2;
}

.chart circle {
    fill: #43a318;
    stroke: #fbf6f1;
    stroke-width: 2;
}

.chart-actions {
    display: flex;
    gap: 37px;
    padding: 15px 0 0 14px;
}

.btn {
    height: 23px;
    display: flex;
    align-items: stretch;
    border: 1px solid #d0ccc8;
    border-radius: 2px;
    background: linear-gradient(#fff, #ececec);
    font: 11px "Liberation Sans", Arial, sans-serif;
    color: #555;
}

.btn .ico {
    width: 24px;
    display: flex;
    align-items: center;
    justify-content: center;
    background: #e2e2e2;
}

.btn svg {
    width: 12px;
    height: 12px;
    fill: #444;
}

.btn .txt {
    align-self: center;
    padding: 0 9px;
}

.small {
    height: 21px;
    font-size: 10px;
}

.small .ico {
    width: 22px;
}

.small svg {
    width: 11px;
    height: 11px;
}

.small .txt {
    padding: 0 7px 0 8px;
}

.subscribers {
    table-layout: fixed;
    width: 100%;
    margin-top: 20px;
    border-collapse: collapse;
    line-height: 17px;
}

.subscribers th,
.subscribers td {
    border: 1px solid #d8d3ce;
    overflow: hidden;
}

.subscribers th {
    height: 49px;
    padding: 0 11px 0 0;
    background: #ece8e4;
    color: #222;
    font-size: 10px;
    font-weight: normal;
    line-height: 14px;
}

.subscribers th:first-child {
    padding: 0 0 0 13px;
    text-align: left;
}

.subscribers .sort-col {
    padding: 0 2px 0 8px;
}

.subscribers td {
    padding: 9px;
    color: #444;
    font-size: 12px;
}

.subscribers td:last-child,
.subscribers th:last-child {
    padding: 0 0 0 5px;
}

.subscribers .ok {
    color: #0a7a0a;
    font-weight: 600;
}

.sorted {
    display: flex;
    align-items: center;
    gap: 6px;
}

.sorted svg {
    flex: none;
    width: 10px;
    height: 12px;
    fill: none;
    stroke: #444;
    stroke-width: 2;
}

.tools {
    display: flex;
    align-items: center;
    gap: 10px;
    margin-left: 4px;
}

.tools input {
    flex: none;
    margin-right: 7px;
}

.tools svg {
    flex: none;
    width: 13px;
    height: 13px;
    fill: #333;
}

.w52 { width: 52px; }
.w58 { width: 58px; }
.w63 { width: 63px; }
.w65 { width: 65px; }
.w66 { width: 66px; }
.w70 { width: 70px; }
.w71 { width: 71px; }
.w72 { width: 72px; }
.w74 { width: 74px; }
.w80 { width: 80px; }
.w81 { width: 81px; }
.w86 { width: 86px; }
.w91 { width: 91px; }
.w95 { width: 95px; }
.w97 { width: 97px; }
.w105 { width: 105px; }
.w107 { width: 107px; }
.w110 { width: 110px; }
.w113 { width: 113px; }
.w120 { width: 120px; }
.w221 { width: 221px; }
.w224 { width: 224px; }

/* Modal */
.overlay {
    position: absolute;
    inset: 0;
    display: flex;
    justify-content: center;
    padding: 19px 0;
    background: rgba(0, 0, 0, .65);
    font-family: "Liberation Sans", Arial, sans-serif;
}

.modal {
    position: relative;
    width: 752px;
    display: flex;
    justify-content: space-between;
    padding: 14px;
    border-radius: 4px;
    background: #f9f9f9;
    box-shadow: 0 10px 25px rgba(0, 0, 0, .5);
}

.modal-close {
    position: absolute;
    right: -15px;
    top: -14px;
    width: 27px;
    height: 27px;
    border: 2px solid #fff;
    border-radius: 50%;
    background: #222;
    box-shadow: 0 1px 3px #000;
}

.modal-close svg {
    display: block;
    width: 11px;
    height: 11px;
    margin: auto;
    fill: #fff;
}

.modal-body {
    width: 675px;
}

.toolbar {
    position: relative;
    height: 39px;
    display: flex;
    align-items: center;
    justify-content: flex-end;
    padding-right: 9px;
    background: #2a62aa;
    color: #fff;
    font-weight: bold;
}

.toolbar a {
    color: #fff;
}

.slash {
    margin: 0 6px 0 3px;
}

.toolbar a + .btn {
    margin: 0 8px 0 22px;
}

.fields {
    display: grid;
    grid-template-columns: 229px 341px;
    grid-auto-rows: minmax(20px, auto);
    align-items: center;
    width: 670px;
    margin-top: -8px;
    padding: 0 0 9px 11px;
    background: #eee;
    font-size: 12px;
    line-height: 14px;
}

.fields label {
    padding: 1px 12px 1px 0;
}

.fields input[type="checkbox"] {
    margin: 0 0 3px 4px;
}

.fields input[type="text"] {
    width: 100%;
    height: 30px;
    margin: 1px 0;
    padding: 0 12px;
    border: 1px solid #ccc;
    border-radius: 2px;
    color: #444;
    font-size: 12px;
}

.date {
    display: flex;
}

.fields .date input {
    width: 94px;
}

.date svg {
    width: 15px;
    height: 15px;
    margin-top: 5px;
}

.modal h2 {
    margin: 14px 0 4px;
    color: #444;
    font-size: 15px;
    line-height: 18px;
}

.products {
    table-layout: fixed;
    width: 670px;
    border-collapse: collapse;
    font-size: 12px;
    line-height: 14px;
}

.products thead {
    border: 1px solid #000;
}

.products th {
    height: 25px;
    padding: 0 4px;
    border-left: 1px solid #ccc;
    background: #eee;
    font-size: 10px;
    text-align: left;
}

.products th:first-child {
    border-left-color: #000;
    text-align: center;
}

.products tbody tr {
    height: 25px;
    border: 1px solid #ccc;
}

.products td {
    padding: 2px 0 2px 3px;
}

.products td:first-child {
    padding-right: 20px;
}

.products td input {
    display: block;
    width: 46px;
    height: 19px;
    padding: 0 1px 3px;
    border: 1px solid #999;
    font-size: 12px;
}

.products .num {
    padding-left: 10px;
}

.products .mid {
    padding-left: 13px;
}

.products td.del {
    padding: 0;
}

.del button {
    display: block;
    width: 26px;
    height: 19px;
    border: 1px solid #d8402c;
    border-radius: 2px;
    background: #e7574a;
}

.del svg {
    display: block;
    width: 9px;
    height: 11px;
    margin: auto;
    fill: #fff;
}

.add-row {
    display: flex;
    justify-content: flex-end;
    width: 645px;
    height: 25px;
    padding: 2px 4px 0 0;
    border: 1px solid #ccc;
    border-top: 0;
}

.save-row {
    display: flex;
    align-items: center;
    gap: 25px;
    margin: 13px 0 15px;
}

.save {
    width: 143px;
    height: 29px;
    display: flex;
    align-items: stretch;
    border: 1px solid #1b6fa8;
    border-radius: 2px;
    background: linear-gradient(#2189d0, #1b7ac0);
    color: #fff;
    font-size: 12px;
    font-weight: bold;
}

.save .ico {
    width: 31px;
    display: flex;
    align-items: center;
    padding-left: 8px;
    background: #1b75b5;
}

.save svg {
    width: 13px;
    height: 13px;
    fill: #fff;
}

.save .txt {
    flex: 1;
    align-self: center;
}

.form-links {
    position: relative;
    width: 609px;
    height: 206px;
    padding: 6px 5px 0;
    border: 1px solid #ddd;
    background: #fdfdfd;
}

.form-links h3 {
    color: #444;
    font: 14px "Open Sans", sans-serif;
    line-height: 18px;
}

.form-links p {
    padding-right: 40px;
    color: #555;
    font-size: 11px;
    line-height: 12px;
}

.form-links li {
    height: 21px;
    padding: 3px 0 0 5px;
    line-height: 15px;
}

.form-links li:nth-child(2n) {
    height: 22px;
}

.marked {
    position: relative;
}

/* Red frame around the marked form */
.marked::after {
    content: "";
    position: absolute;
    box-sizing: border-box;
    left: -10px;
    top: -2px;
    width: 179px;
    height: 26px;
    border: 5px solid #f00;
    filter: drop-shadow(1px 2px 2px rgba(0, 0, 0, .7));
}

.callout {
    position: absolute;
    left: 216px;
    top: 114px;
    width: 145px;
    height: 83px;
    padding: 7px 11px;
    border: 6px solid #f00;
    border-radius: 9px;
    background: #fff;
    box-shadow: 2px 2px 4px rgba(0, 0, 0, .7);
    color: #f00;
    font: 18px "Open Sans", sans-serif;
}

.arrow {
    position: absolute;
    left: -244px;
    top: 536px;
    width: 250px;
    height: 232px;
    filter: drop-shadow(1px 2px 2px rgba(0, 0, 0, .8));
}

.modal-scroll,
.page-scroll {
    display: flex;
    flex-direction: column;
    align-items: center;
    justify-content: space-between;
    padding: 8px 0;
    background: #f1f1f1;
}

.modal-scroll {
    width: 21px;
}

.thumb {
    width: 17px;
    height: 225px;
    margin: auto 0 9px;
    background: #c1c1c1;
}

.page-scroll {
    width: 18px;
}

.up,
.down {
    width: 9px;
    height: 6px;
    background: #999;
    clip-path: polygon(50% 0, 100% 100%, 0 100%);
}

.down {
    clip-path: polygon(0 0, 100% 0, 50% 100%);
}

.modal-scroll .up {
    background: #444;
}

.chat {
    position: absolute;
    right: 15px;
    bottom: 17px;
    width: 56px;
    height: 56px;
    border: 0;
    border-radius: 50%;
    background: #c94a86;
    box-shadow: 0 2px 14px rgba(0, 0, 0, .25);
}

.chat svg {
    display: block;
    width: 28px;
    height: 31px;
    margin: auto;
}
```
